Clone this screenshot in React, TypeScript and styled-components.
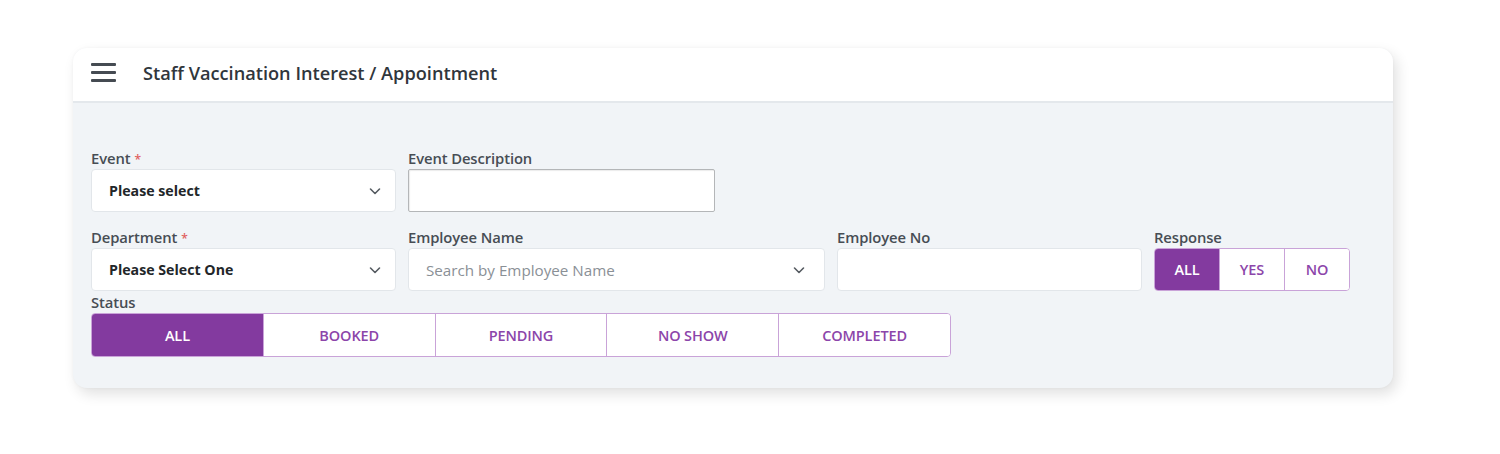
import React, { useState } from 'react';
import styled, { createGlobalStyle } from 'styled-components';

const GlobalStyle = createGlobalStyle`
  body {
    margin: 0;
    background: #ffffff;
    font-family: 'Open Sans', 'Noto Sans', 'Liberation Sans', sans-serif;
  }
`;

const Page = styled.div`
  width: 1500px;
  height: 454px;
  padding: 48px 0 0 73px;
  box-sizing: border-box;
`;

const Card = styled.div`
  width: 1320px;
  height: 340px;
  border-radius: 14px;
  background: #f1f4f7;
  overflow: hidden;
  box-shadow: 4px 6px 14px rgba(0, 0, 0, 0.12), 0 0 3px rgba(0, 0, 0, 0.04);
  display: flex;
  flex-direction: column;
`;

const Header = styled.div`
  height: 55px;
  box-sizing: border-box;
  flex-shrink: 0;
  background: #ffffff;
  border-bottom: 2px solid #e4e8ec;
  display: flex;
  align-items: center;
  padding: 0 0 4px 18px;
  gap: 27px;
`;

const Burger = styled.div`
  width: 25px;
  display: flex;
  flex-direction: column;
  gap: 5px;

  span {
    display: block;
    height: 3px;
    border-radius: 1px;
    background: #454b52;
  }
`;

const Title = styled.h1`
  margin: 0;
  font-size: 18.2px;
  font-weight: 600;
  color: #30363c;
`;

const Body = styled.div`
  padding: 46px 18px 0;
  display: flex;
  flex-direction: column;
`;

const Row = styled.div<{ $top?: number }>`
  display: flex;
  gap: 12px;
  margin-top: ${(p) => p.$top ?? 0}px;
`;

const Field = styled.div<{ $width: number }>`
  width: ${(p) => p.$width}px;
  display: flex;
  flex-direction: column;
`;

const Label = styled.label`
  font-size: 14.8px;
  font-weight: 600;
  line-height: 18px;
  height: 18px;
  color: #474d54;
  margin-bottom: 2px;
  letter-spacing: -0.1px;
`;

const Required = styled.span`
  color: #e06060;
  margin-left: 4px;
  font-size: 12px;
  line-height: 1;
`;

const SelectBox = styled.div<{ $placeholder?: boolean; $padRight?: number }>`
  height: 43px;
  box-sizing: border-box;
  background: #ffffff;
  border: 1px solid #e2e6ea;
  border-radius: 4px;
  display: flex;
  align-items: center;
  justify-content: space-between;
  padding: 0 ${(p) => p.$padRight ?? 13}px 0 17px;
  font-size: ${(p) => (p.$placeholder ? 15.2 : 14.2)}px;
  font-weight: ${(p) => (p.$placeholder ? 400 : 700)};
  color: ${(p) => (p.$placeholder ? '#8a9096' : '#222629')};
`;

const TextInput = styled.input<{ $strong?: boolean }>`
  height: 43px;
  box-sizing: border-box;
  background: #ffffff;
  border: ${(p) => (p.$strong ? '1px solid #b4b6b8' : '1px solid #e2e6ea')};
  box-shadow: ${(p) => (p.$strong ? 'inset 1px 1px 1px rgba(0,0,0,0.08)' : 'none')};
  border-radius: ${(p) => (p.$strong ? '2px' : '4px')};
  outline: none;
  padding: 0 12px;
  font-family: inherit;
  font-size: 14px;
`;

const Segmented = styled.div<{ $width: number; $height: number }>`
  display: flex;
  width: ${(p) => p.$width}px;
  height: ${(p) => p.$height}px;
  box-sizing: border-box;
  border: 1px solid #c9a3d8;
  border-radius: 4px;
  overflow: hidden;
  background: #ffffff;
`;

const SegButton = styled.button<{ $active: boolean }>`
  flex: 1;
  border: none;
  border-left: 1px solid #c9a3d8;
  background: ${(p) => (p.$active ? '#833a9f' : '#ffffff')};
  color: ${(p) => (p.$active ? '#ffffff' : '#8c45aa')};
  font-family: inherit;
  font-size: 14.5px;
  font-weight: 600;
  letter-spacing: -0.1px;
  cursor: pointer;
  padding: 0;

  &:first-child {
    border-left: none;
  }
`;

const Chevron = () => (
  <svg width="14" height="14" viewBox="0 0 14 14" fill="none">
    <path d="M2.5 5l4.5 4.5L11.5 5" stroke="#555b61" strokeWidth="1.6" strokeLinecap="round" strokeLinejoin="round" />
  </svg>
);

const statusOptions = ['ALL', 'BOOKED', 'PENDING', 'NO SHOW', 'COMPLETED'];
const responseOptions = ['ALL', 'YES', 'NO'];

export default function App() {
  const [status, setStatus] = useState('ALL');
  const [response, setResponse] = useState('ALL');

  return (
    <Page>
      <GlobalStyle />
      <Card>
        <Header>
          <Burger>
            <span />
            <span />
            <span />
          </Burger>
          <Title>Staff Vaccination Interest / Appointment</Title>
        </Header>
        <Body>
          <Row>
            <Field $width={305}>
              <Label>
                Event<Required>*</Required>
              </Label>
              <SelectBox>
                Please select
                <Chevron />
              </SelectBox>
            </Field>
            <Field $width={307}>
              <Label>Event Description</Label>
              <TextInput $strong />
            </Field>
          </Row>
          <Row $top={16}>
            <Field $width={305}>
              <Label>
                Department<Required>*</Required>
              </Label>
              <SelectBox>
                Please Select One
                <Chevron />
              </SelectBox>
            </Field>
            <Field $width={417}>
              <Label>Employee Name</Label>
              <SelectBox $placeholder $padRight={18}>
                Search by Employee Name
                <Chevron />
              </SelectBox>
            </Field>
            <Field $width={305}>
              <Label>Employee No</Label>
              <TextInput />
            </Field>
            <Field $width={196}>
              <Label>Response</Label>
              <Segmented $width={196} $height={43}>
                {responseOptions.map((o) => (
                  <SegButton key={o} $active={response === o} onClick={() => setResponse(o)}>
                    {o}
                  </SegButton>
                ))}
              </Segmented>
            </Field>
          </Row>
          <Row $top={2}>
            <Field $width={860}>
              <Label>Status</Label>
              <Segmented $width={860} $height={44}>
                {statusOptions.map((o) => (
                  <SegButton key={o} $active={status === o} onClick={() => setStatus(o)}>
                    {o}
                  </SegButton>
                ))}
              </Segmented>
            </Field>
          </Row>
        </Body>
      </Card>
    </Page>
  );
}
